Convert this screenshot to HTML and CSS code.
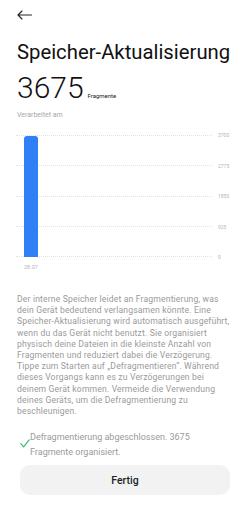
FILE: index.html
```html
<!DOCTYPE html>
<html lang="de">
<head>
<meta charset="utf-8">
<link rel="stylesheet" href="styles.css">
</head>
<body>
<div class="page">
  <header class="topbar">
    <svg class="back" width="15" height="10" viewBox="0 0 15 10"><path d="M14.5 5H1M5 1L1 5l4 4" fill="none" stroke="#222" stroke-width="1.1" stroke-linecap="round" stroke-linejoin="round"/></svg>
  </header>
  <h1 class="title">Speicher-Aktualisierung</h1>
  <div class="count"><span class="num">3675</span><span class="unit">Fragmente</span></div>
  <div class="sub">Verarbeitet am</div>
  <div class="chart">
    <div class="plot">
      <div class="grid">
        <div class="gl"></div><div class="gl"></div><div class="gl"></div><div class="gl"></div><div class="gl"></div>
      </div>
      <div class="bars">
        <div class="bar" style="height:99.3%"></div>
      </div>
    </div>
    <div class="yaxis">
      <span>3700</span><span>2775</span><span>1850</span><span>925</span><span>0</span>
    </div>
  </div>
  <div class="xaxis"><span>28.07</span></div>
  <p class="desc">Der interne Speicher leidet an Fragmentierung, was dein Gerät bedeutend verlangsamen könnte. Eine Speicher-Aktualisierung wird automatisch ausgeführt, wenn du das Gerät nicht benutzt. Sie organisiert physisch deine Dateien in die kleinste Anzahl von Fragmenten und reduziert dabei die Verzögerung.<br>Tippe zum Starten auf „Defragmentieren“. Während dieses Vorgangs kann es zu Verzögerungen bei deinem Gerät kommen. Vermeide die Verwendung deines Geräts, um die Defragmentierung zu beschleunigen.</p>
  <div class="status">
    <svg class="check" width="10" height="9" viewBox="0 0 10 9"><path d="M0.8 4.6l2.8 3.2L9.2 0.8" fill="none" stroke="#2dbb6a" stroke-width="1.1" stroke-linecap="round" stroke-linejoin="round"/></svg>
    <span class="status-text">Defragmentierung abgeschlossen. 3675 Fragmente organisiert.</span>
  </div>
  <button class="done">Fertig</button>
</div>
</body>
</html>
```
FILE: styles.css
```css
* { box-sizing: border-box; }
html, body { margin: 0; padding: 0; background: #fff; }
body { font-family: Roboto, "Noto Sans", sans-serif; color: #111; }
.page { width: 250px; padding: 0 16px 0 17px; display: flex; flex-direction: column; }
.page > * { flex: none; }
.topbar { height: 30px; display: flex; align-items: center; }
.back { display: block; }
.title { margin: 10px 0 0; font-size: 20.3px; font-weight: 400; line-height: 24px; color: #111; white-space: nowrap; }
.count { display: flex; align-items: baseline; margin-top: 7px; height: 34px; }
.num { font-size: 30px; font-weight: 300; line-height: 34px; color: #111; }
.unit { font-size: 6px; margin-left: 4px; color: #222; }
.sub { font-size: 7px; color: #a8a8a8; margin-top: 5px; line-height: 10px; }
.chart { display: flex; margin-top: 15px; margin-left: -1px; }
.plot { width: 196px; height: 122px; display: grid; flex: none; }
.grid, .bars { grid-area: 1 / 1; }
.grid { display: flex; flex-direction: column; justify-content: space-between; }
.gl { height: 0; border-top: 1px dotted #e2e2e2; }
.bars { display: flex; align-items: flex-end; padding-left: 8px; }
.bar { width: 14px; background: #2f7ff6; border-radius: 3px 3px 0 0; }
.yaxis { display: flex; flex-direction: column; justify-content: space-between; margin: -3px 0 -3px 6px; font-size: 5px; line-height: 6px; color: #b5b5b5; }
.xaxis { font-size: 5.5px; color: #b5b5b5; padding-left: 7px; margin-top: 6px; line-height: 8px; }
.desc { margin: 23px 0 0; font-size: 8.6px; line-height: 11.2px; letter-spacing: 0.16px; color: #9a9a9a; }
.status { display: flex; align-items: flex-start; margin-top: 13px; padding-right: 11px; }
.check { margin: 9px 0 0 3px; flex: none; }
.status-text { font-size: 9px; line-height: 14.5px; color: #9a9a9a; }
.done { margin: 6px 4px 0 3px; height: 30px; border: none; border-radius: 10px; background: #f2f2f2; font-family: Roboto, "Noto Sans", sans-serif; font-size: 10.5px; font-weight: 500; color: #222; }
```
